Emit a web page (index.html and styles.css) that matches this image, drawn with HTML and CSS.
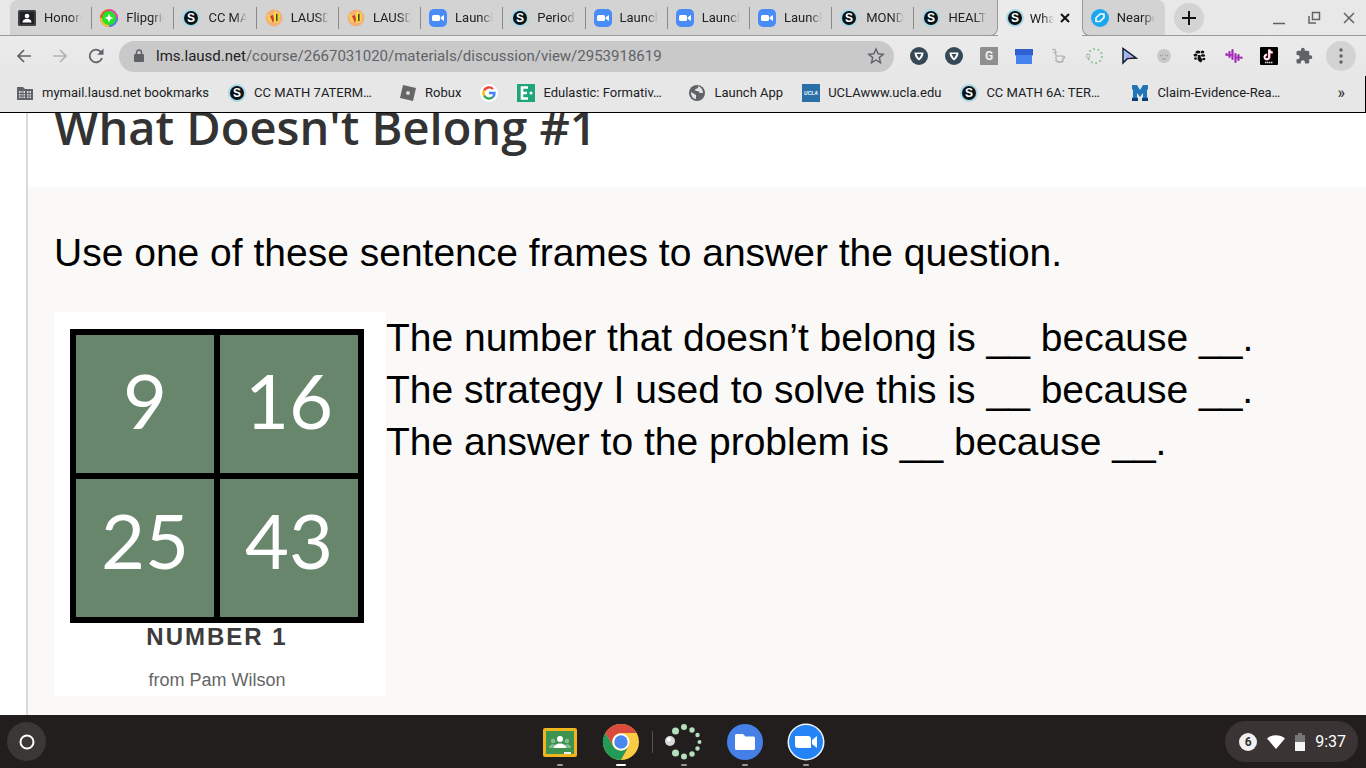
FILE: index.html
```html
<!DOCTYPE html>
<html lang="en">
<head>
    <meta charset="UTF-8">
    <meta name="viewport" content="width=device-width, initial-scale=1.0">
    <title>What Doesn't Belong #1</title>
    <link rel="stylesheet" href="styles.css">
</head>
<body>
    <!-- shared icons -->
    <svg class="defs" aria-hidden="true">
        <symbol id="schoology" viewBox="0 0 18 18">
            <circle cx="9" cy="9" r="9" fill="#a9d9e6"/>
            <circle cx="9" cy="9" r="7" fill="#0b1216"/>
            <text x="9" y="13" text-anchor="middle" font-family="Liberation Sans" font-weight="bold" font-size="12" fill="#fff">S</text>
        </symbol>
        <symbol id="zoom" viewBox="0 0 18 18">
            <rect width="18" height="18" rx="5" fill="#4a8cf7"/>
            <rect x="3" y="6" width="8" height="6" rx="1.5" fill="#fff"/>
            <path d="M11.700 8.200 15 6v6l-3.300-2.200z" fill="#fff"/>
        </symbol>
        <symbol id="lausd" viewBox="0 0 18 18">
            <circle cx="9" cy="9" r="8.500" fill="#f3b07a"/>
            <path d="M1.500 5l6 2 1 7-5-2z" fill="#f6cf55"/>
            <path d="M5 7l3 7 1-3-1-5z" fill="#d8362a"/>
            <path d="M9 3l2-1 1 8-3 5z" fill="#f4e13a"/>
            <path d="M13 3l2 3-1 7-2 1z" fill="#f0d838"/>
            <path d="M11.800 5v7" stroke="#3b4a22" stroke-width="1.500"/>
        </symbol>
        <symbol id="shield" viewBox="0 0 18 18">
            <circle cx="9" cy="9" r="9" fill="#344955"/>
            <path d="M4.500 5.500h9c0 3.500-2 6.500-4.500 8-2.500-1.500-4.500-4.500-4.500-8z" fill="#fff"/>
            <path d="M6.500 7h5L9 11.500z" fill="#344955"/>
        </symbol>
    </svg>

    <div class="tabstrip">
        <nav class="tabs" aria-label="Tabs">
            <a href="#" class="tab">
                <svg class="icon" viewBox="0 0 18 18"><rect y="1" width="18" height="16" rx="1.500" fill="#3c4043"/><rect x="2" y="3" width="14" height="12" fill="#202124"/><circle cx="9" cy="7" r="2.300" fill="#fff"/><path d="M4.500 13.500c0-5 9-5 9 0z" fill="#fff"/></svg>
                <span class="tab-title">Honors</span>
            </a>
            <a href="#" class="tab">
                <svg class="icon" viewBox="0 0 18 18"><circle cx="9" cy="9" r="9" fill="#e8582a"/><path d="M9 0a9 9 0 0 1 9 9h-9z" fill="#e045c0"/><path d="M0 9a9 9 0 0 0 9 9V9z" fill="#f0c52c"/><path d="M9 18a9 9 0 0 0 9-9H9z" fill="#4a82ec"/><circle cx="9" cy="9" r="7" fill="#26e029"/><path d="M9 4.500l1.300 3.200 3.200 1.300-3.200 1.300L9 13.500l-1.300-3.200L4.500 9l3.200-1.300z" fill="#fff"/></svg>
                <span class="tab-title">Flipgrid</span>
            </a>
            <a href="#" class="tab"><svg class="icon"><use href="#schoology"/></svg><span class="tab-title">CC MATH</span></a>
            <a href="#" class="tab"><svg class="icon"><use href="#lausd"/></svg><span class="tab-title">LAUSD</span></a>
            <a href="#" class="tab"><svg class="icon"><use href="#lausd"/></svg><span class="tab-title">LAUSD</span></a>
            <a href="#" class="tab"><svg class="icon"><use href="#zoom"/></svg><span class="tab-title">Launch</span></a>
            <a href="#" class="tab"><svg class="icon"><use href="#schoology"/></svg><span class="tab-title">Period</span></a>
            <a href="#" class="tab"><svg class="icon"><use href="#zoom"/></svg><span class="tab-title">Launch</span></a>
            <a href="#" class="tab"><svg class="icon"><use href="#zoom"/></svg><span class="tab-title">Launch</span></a>
            <a href="#" class="tab"><svg class="icon"><use href="#zoom"/></svg><span class="tab-title">Launch</span></a>
            <a href="#" class="tab"><svg class="icon"><use href="#schoology"/></svg><span class="tab-title">MOND</span></a>
            <a href="#" class="tab before-active"><svg class="icon"><use href="#schoology"/></svg><span class="tab-title">HEALT</span></a>
            <div class="tab active">
                <svg class="icon"><use href="#schoology"/></svg>
                <span class="tab-title">What</span>
                <button class="close" aria-label="Close tab"><svg width="10" height="10" viewBox="0 0 10 10"><path d="M1 1l8 8M9 1l-8 8" stroke="#111" stroke-width="2"/></svg></button>
            </div>
            <a href="#" class="tab last">
                <svg class="icon" viewBox="0 0 18 18"><circle cx="9" cy="9" r="9" fill="#19a7f2"/><path d="M5 12.500V9l4-4h4v3.500l-4 4z" fill="none" stroke="#fff" stroke-width="1.600" stroke-linejoin="round"/></svg>
                <span class="tab-title">Nearpod</span>
            </a>
        </nav>
        <button class="new-tab" aria-label="New tab"><svg width="14" height="14" viewBox="0 0 14 14"><path d="M7 0v14M0 7h14" stroke="#111" stroke-width="2"/></svg></button>
        <div class="window-buttons">
            <button aria-label="Minimize"><svg width="14" height="14" viewBox="0 0 14 14"><path d="M1 12.500h12" stroke="#5f6368" stroke-width="1.500"/></svg></button>
            <button aria-label="Restore"><svg width="14" height="14" viewBox="0 0 14 14"><path d="M5.500 1.500h7v7h-7z" fill="none" stroke="#5f6368" stroke-width="1.500"/><path d="M2 5v7h7" fill="none" stroke="#5f6368" stroke-width="1.500"/></svg></button>
            <button aria-label="Close"><svg width="14" height="14" viewBox="0 0 14 14"><path d="M2 2l10 10M12 2L2 12" stroke="#5f6368" stroke-width="1.500"/></svg></button>
        </div>
    </div>

    <div class="toolbar">
        <div class="nav-buttons">
            <button aria-label="Back"><svg width="18" height="18" viewBox="0 0 18 18"><path d="M16 9H3M9 3L3 9l6 6" fill="none" stroke="#5f6368" stroke-width="1.700"/></svg></button>
            <button aria-label="Forward"><svg width="18" height="18" viewBox="0 0 18 18"><path d="M2 9h13M9 3l6 6-6 6" fill="none" stroke="#b0b2b4" stroke-width="1.700"/></svg></button>
            <button aria-label="Reload"><svg width="18" height="18" viewBox="0 0 18 18"><path d="M15 11A6.300 6.300 0 1 1 13.800 4.900" fill="none" stroke="#5f6368" stroke-width="1.800"/><path d="M16.500 1.500v6.300h-6.300z" fill="#5f6368"/></svg></button>
        </div>
        <div class="omnibox">
            <svg width="12" height="14" viewBox="0 0 12 14"><rect x="1" y="5" width="10" height="8" rx="1" fill="#5f6368"/><path d="M3.500 5V3.500a2.500 2.500 0 0 1 5 0V5" fill="none" stroke="#5f6368" stroke-width="1.400"/></svg>
            <span class="url"><b>lms.lausd.net</b>/course/2667031020/materials/discussion/view/2953918619</span>
            <button aria-label="Bookmark this page"><svg width="18" height="18" viewBox="0 0 18 18"><path d="M9 2l2.100 4.800 5.100.4-3.900 3.400 1.200 5.100L9 13l-4.500 2.700 1.200-5.100L1.800 7.200l5.100-.4z" fill="none" stroke="#5f6368" stroke-width="1.400"/></svg></button>
        </div>
        <div class="extensions">
            <button aria-label="Shield"><svg class="icon"><use href="#shield"/></svg></button>
            <button aria-label="Shield 2"><svg class="icon"><use href="#shield"/></svg></button>
            <button aria-label="G"><svg class="icon" viewBox="0 0 18 18"><path d="M1 0h17v18H0V1z" fill="#8f8f8f"/><text x="9" y="13" text-anchor="middle" font-family="Roboto" font-weight="bold" font-size="12" fill="#eee">G</text></svg></button>
            <button aria-label="Window"><svg class="icon" viewBox="0 0 18 18"><path d="M0 2h18v6l-1 1v8H1V9L0 8z" fill="#4583ee"/><path d="M0 2h18v6H0z" fill="#315fcd"/></svg></button>
            <button aria-label="Cup"><svg class="icon" viewBox="0 0 18 18" fill="none" stroke="#aaa"><path d="M2 3l3-1 1 7M3 6l4-1M6 9h7v3l-2 3H8l-2-3zM13 9l2 1-2 3M5 13c2 3 6 3 9 1"/></svg></button>
            <button aria-label="Dots"><svg class="icon" viewBox="0 0 18 18"><circle cx="10" cy="9" r="7" fill="none" stroke="#94c79b" stroke-width="2" stroke-dasharray="2 2.400"/><circle cx="3" cy="9" r="1.800" fill="#eee" stroke="#888" stroke-width=".6"/></svg></button>
            <button aria-label="Cursor"><svg class="icon" viewBox="0 0 18 18"><path d="M3 1.500v14.500l4.500-4.500 8.500-.5z" fill="#8fc5f0" stroke="#18182c" stroke-width="1.500"/><path d="M6 6v5l6-.7z" fill="#c39ee4"/></svg></button>
            <button aria-label="Face"><svg class="icon" viewBox="0 0 18 18"><circle cx="9" cy="9" r="7" fill="#c8c8c8"/><path d="M5 8l1.500 1L8 8M10 8l1.500 1L13 8M7 12h4" stroke="#999" fill="none"/></svg></button>
            <button aria-label="Paw"><svg class="icon" viewBox="0 0 18 18" fill="#111"><ellipse cx="8" cy="5" rx="2.500" ry="1.500"/><ellipse cx="12.500" cy="5" rx="1.800" ry="1.500"/><ellipse cx="5.500" cy="8" rx="2" ry="1.500"/><ellipse cx="13" cy="8.500" rx="2.200" ry="1.300"/><circle cx="5.500" cy="11.500" r="1.300"/><path d="M8 8h2.500l.5 3 2 1-1 2-1 1.500-2-1-1.500-2z"/><circle cx="14" cy="12" r="1.300"/></svg></button>
            <button aria-label="Sound"><svg class="icon" viewBox="0 0 18 18"><path d="M1.500 7v1M4.500 5v5M7.500 3v9M10.500 7v8M13.500 8v5M16.500 10.500v.5" stroke="#a12bb5" stroke-width="2.200" stroke-linecap="round"/><path d="M2 8h6M10 10.500h6" stroke="#a12bb5" stroke-width="1.500"/></svg></button>
            <button aria-label="TikTok"><svg class="icon" viewBox="0 0 18 18"><rect width="18" height="18" rx="1" fill="#000"/><path d="M9.500 2.500v7.500A2.300 2.300 0 1 1 7.300 7.700M9.500 2.500c.3 2 1.500 3 3.500 3" fill="none" stroke="#e8476a" stroke-width="2.400"/><path d="M9 2.500v7.500A2.300 2.300 0 1 1 6.800 7.700M9 2.500c.3 2 1.500 3 3.500 3" fill="none" stroke="#fff" stroke-width="1.700"/><path d="M5 15.500h8" stroke="#ddd" stroke-width="1.500" stroke-dasharray="1.500 .5"/></svg></button>
            <button aria-label="Extensions"><svg class="icon" viewBox="0 0 24 24"><path d="M20.500 11H19V7a2 2 0 0 0-2-2h-4V3.500a2.500 2.500 0 0 0-5 0V5H4a2 2 0 0 0-2 2v3.800h1.500a2.700 2.700 0 0 1 0 5.400H2V20a2 2 0 0 0 2 2h3.800v-1.500a2.700 2.700 0 0 1 5.400 0V22H17a2 2 0 0 0 2-2v-4h1.500a2.500 2.500 0 0 0 0-5z" fill="#5f6368"/></svg></button>
        </div>
        <button class="menu" aria-label="Menu"><svg width="4" height="16" viewBox="0 0 4 16" fill="#5f6368"><circle cx="2" cy="2" r="1.700"/><circle cx="2" cy="8" r="1.700"/><circle cx="2" cy="14" r="1.700"/></svg></button>
    </div>

    <nav class="bookmarks" aria-label="Bookmarks">
        <a href="#"><svg class="icon" viewBox="0 0 18 18"><path d="M1 3h6l2 2h8v11H1z" fill="#5f6368"/><path d="M3 7h6v7H3zM11 7h4v7h-4z" fill="#ddd"/><path d="M3 9.500h12M3 12h12M5 7v7M7 7v7M13 7v7" stroke="#5f6368"/></svg>mymail.lausd.net bookmarks</a>
        <a href="#" class="long"><svg class="icon"><use href="#schoology"/></svg>CC MATH 7ATERM…</a>
        <a href="#"><svg class="icon" viewBox="0 0 18 18"><path d="M4 1l13 3-3 13L1 14z" fill="#666"/><path d="M7.800 7l3.200.8-.8 3.200-3.200-.8z" fill="#e4e4e4"/></svg>Robux</a>
        <a href="#" aria-label="Google"><svg class="icon" viewBox="0 0 18 18"><circle cx="9" cy="9" r="9" fill="#fff"/><g fill="none" stroke-width="2.400"><path d="M13 5A5.600 5.600 0 0 0 4 6.600" stroke="#ea4335"/><path d="M4 6.600a5.600 5.600 0 0 0 0 4.800" stroke="#fbbc05"/><path d="M4 11.400a5.600 5.600 0 0 0 8.800 1.800" stroke="#34a853"/><path d="M12.800 13.200A5.600 5.600 0 0 0 14.500 9H9" stroke="#4285f4"/></g></svg></a>
        <a href="#" class="long"><svg class="icon" viewBox="0 0 18 18"><rect width="18" height="18" fill="#1fa57b"/><path d="M11 3.500H5v11h6M5 9h5" fill="none" stroke="#fff" stroke-width="2.600"/><circle cx="14" cy="9" r="1.500" fill="#fff"/></svg>Edulastic: Formativ…</a>
        <a href="#"><svg class="icon" viewBox="0 0 18 18"><circle cx="9" cy="9" r="8" fill="#5f6368"/><path d="M10 2c1 2-1 3-3 3 0 2 1 2 3 2l2 2h3c0-3-2-6-5-7zM3 8l5 3v4C5 15 3 12 3 8z" fill="#e4e4e4"/></svg>Launch App</a>
        <a href="#"><svg class="icon" viewBox="0 0 18 18"><rect width="18" height="18" fill="#2a6fa8"/><text x="9" y="11" text-anchor="middle" font-family="Liberation Sans" font-weight="bold" font-style="italic" font-size="5" fill="#fff">UCLA</text></svg>UCLAwww.ucla.edu</a>
        <a href="#" class="long"><svg class="icon"><use href="#schoology"/></svg>CC MATH 6A: TER…</a>
        <a href="#" class="long"><svg class="icon" viewBox="0 0 18 18"><path d="M1 1h5l3 5 3-5h5v4l-1 1v7l1 1v3h-6v-3l1-1V9l-3 4-3-4v4l1 1v3H1v-3l1-1V6L1 5z" fill="#2076b8"/><path d="M1 15.500h6M11 15.500h6" stroke="#0e3e70" stroke-width="3"/></svg>Claim-Evidence-Rea…</a>
        <button class="more" aria-label="More bookmarks">»</button>
    </nav>

    <main class="page">
        <article class="discussion">
            <header class="discussion-header">
                <h1>What Doesn't Belong #1</h1>
            </header>
            <div class="discussion-body">
                <p>Use one of these sentence frames to answer the question.</p>
                <div class="prompt">
                    <figure class="puzzle">
                        <div class="squares">
                            <div>9</div>
                            <div>16</div>
                            <div class="low">25</div>
                            <div class="low">43</div>
                        </div>
                        <figcaption>
                            <strong>NUMBER 1</strong>
                            <span>from Pam Wilson</span>
                        </figcaption>
                    </figure>
                    <div class="frames">
                        <p>The number that doesn’t belong is __ because __.</p>
                        <p>The strategy I used to solve this is __ because __.</p>
                        <p>The answer to the problem is __ because __.</p>
                    </div>
                </div>
            </div>
        </article>
    </main>

    <footer class="shelf">
        <button class="launcher" aria-label="Launcher"><svg width="16" height="16" viewBox="0 0 16 16"><circle cx="8" cy="8" r="6.500" fill="none" stroke="#fff" stroke-width="2"/></svg></button>
        <div class="apps">
            <button class="app" aria-label="Classroom">
                <svg viewBox="0 0 38 38"><rect x="2" y="5" width="34" height="29" rx="2" fill="#f0b51f"/><rect x="5" y="8" width="28" height="23" fill="#3f9350"/><circle cx="12" cy="18" r="2.200" fill="#85bd8e"/><circle cx="26" cy="18" r="2.200" fill="#85bd8e"/><path d="M8 25c0-5 8-5 8 0zM22 25c0-5 8-5 8 0z" fill="#85bd8e"/><circle cx="19" cy="16" r="3" fill="#fff"/><path d="M13 25c0-6 12-6 12 0z" fill="#fff"/><path d="M23 29h7v2h-7z" fill="#eee"/></svg>
            </button>
            <button class="app current" aria-label="Chrome">
                <svg viewBox="0 0 38 38"><circle cx="19" cy="19" r="18" fill="#fbcb43"/><path d="M3.400 10A18 18 0 0 1 34.600 10H19a9 9 0 0 0-8 13z" fill="#d94b3d"/><path d="M3.400 10A18 18 0 0 0 19 37l8-14.500A9 9 0 0 1 11 23z" fill="#229a58"/><circle cx="19" cy="19" r="8.500" fill="#fff"/><circle cx="19" cy="19" r="6.700" fill="#4a87ee"/></svg>
            </button>
            <span class="divider"></span>
            <button class="app" aria-label="Dots">
                <svg viewBox="0 0 38 38" fill="#b3dfbd"><circle cx="5" cy="18" r="5" fill="#d8d8d8"/><circle cx="3.800" cy="16.500" r="2" fill="#fff"/><circle cx="10.500" cy="8" r="3.500"/><circle cx="19" cy="4" r="3"/><circle cx="27" cy="7" r="2.700"/><circle cx="32.500" cy="12" r="2.200"/><circle cx="34.500" cy="19" r="2"/><circle cx="32.500" cy="25.500" r="2.200"/><circle cx="27" cy="31" r="2.700"/><circle cx="19" cy="33.500" r="3"/><circle cx="10.500" cy="30" r="3.500"/></svg>
            </button>
            <button class="app" aria-label="Files">
                <svg viewBox="0 0 38 38"><circle cx="19" cy="19" r="18" fill="#4480e8"/><path d="M9 12.500A1.500 1.500 0 0 1 10.500 11H17l2.500 2.500h8A1.500 1.500 0 0 1 29 15v10.500a1.500 1.500 0 0 1-1.500 1.500h-17A1.500 1.500 0 0 1 9 25.500z" fill="#fff"/></svg>
            </button>
            <button class="app" aria-label="Zoom">
                <svg viewBox="0 0 38 38"><circle cx="19" cy="19" r="18.500" fill="#f2f5fa"/><circle cx="19" cy="19" r="17" fill="#2584f5"/><path d="M8 13h13a3 3 0 0 1 3 3v9H11a3 3 0 0 1-3-3zM25 17l5-4v12l-5-4z" fill="#fff"/></svg>
            </button>
        </div>
        <button class="status">
            <span class="count">6</span>
            <svg width="18" height="14" viewBox="0 0 18 14"><path d="M0 3.500a14 14 0 0 1 18 0L9 14z" fill="#fff"/></svg>
            <svg width="10" height="18" viewBox="0 0 10 18"><path d="M3 0h4v2h3v16H0V2h3z" fill="#777"/><path d="M0 9h10v9H0z" fill="#f5f5f5"/></svg>
            <span>9:37</span>
        </button>
    </footer>
</body>
</html>
```

FILE: styles.css
```css
* {
    box-sizing: border-box;
}
body, html {
    margin: 0;
    padding: 0;
    height: 100%;
}
body {
    display: flex;
    flex-direction: column;
    overflow: hidden;
    font-family: Roboto, sans-serif;
    font-size: 13px;
    color: #202124;
    background-color: #fff;
}
button {
    border: none;
    padding: 0;
    background: none;
    font: inherit;
    color: inherit;
    display: flex;
    align-items: center;
    justify-content: center;
    cursor: pointer;
}
a {
    color: inherit;
    text-decoration: none;
}
p {
    margin: 0;
}
svg {
    display: block;
    flex-shrink: 0;
}
.defs {
    position: absolute;
    width: 0;
    height: 0;
}
.icon {
    width: 18px;
    height: 18px;
}

/* Tabs */
.tabstrip {
    display: flex;
    align-items: center;
    height: 36px;
    flex-shrink: 0;
    padding: 0 10px;
    background-color: #e8e8e8;
    box-shadow: inset 0 -1px #9a9a9a;
}
.tabs {
    display: flex;
    flex: 0 1 1155px;
    height: 36px;
    min-width: 0;
}
.tab {
    display: flex;
    align-items: center;
    gap: 8px;
    flex: 1 1 0;
    min-width: 0;
    padding: 0 10px 0 8px;
    background: linear-gradient(#8a8a8a, #8a8a8a) right center / 1px 22px no-repeat #d3d3d3;
    border-bottom: 1px solid #9a9a9a;
}
.tab:first-child {
    border-top-left-radius: 8px;
}
.tab.before-active {
    background: #d3d3d3;
    border-right: 1px solid #9a9a9a;
    border-bottom-right-radius: 8px;
}
.tab.last {
    background: #d3d3d3;
    border-left: 1px solid #9a9a9a;
    border-bottom-left-radius: 8px;
    border-top-right-radius: 8px;
}
.tab.active {
    gap: 6px;
    padding: 0 12px 0 8px;
    background: #ebebeb;
    border-bottom: none;
    /* covers the strip's bottom line under the neighbours' corners */
    box-shadow: -6px 0 0 -1px #ebebeb, 6px 0 0 -1px #ebebeb;
}
.tab.before-active, .tab.last {
    z-index: 1;
}
.tab-title {
    flex: 1;
    min-width: 0;
    overflow: hidden;
    white-space: nowrap;
    -webkit-mask-image: linear-gradient(to left, transparent, #000 12px);
    mask-image: linear-gradient(to left, transparent, #000 12px);
}
.new-tab {
    width: 30px;
    height: 30px;
    margin-left: 9px;
    border-radius: 50%;
    background-color: #d3d3d3;
}
.window-buttons {
    display: flex;
    gap: 21px;
    margin-left: auto;
}

/* Toolbar */
.toolbar {
    display: flex;
    align-items: center;
    height: 40px;
    flex-shrink: 0;
    padding: 0 10px 0 15px;
    background: linear-gradient(#ebebeb, #e7e7e7);
}
.nav-buttons {
    display: flex;
    gap: 18px;
}
.omnibox {
    display: flex;
    align-items: center;
    flex: 1;
    min-width: 0;
    height: 31px;
    margin: 0 16px 0 14px;
    padding: 0 9px 0 14px;
    border-radius: 16px;
    background-color: #c9c9c9;
}
.url {
    flex: 1;
    min-width: 0;
    margin-left: 11px;
    overflow: hidden;
    white-space: nowrap;
    font-size: 15px;
    color: #5f6368;
}
.url b {
    font-weight: normal;
    color: #202124;
}
.extensions {
    display: flex;
    gap: 17px;
}
.menu {
    width: 30px;
    height: 30px;
    margin-left: 13px;
    border-radius: 50%;
    background-color: #d3d3d3;
}

/* Bookmarks bar */
.bookmarks {
    display: flex;
    align-items: center;
    gap: 19px;
    height: 37px;
    flex-shrink: 0;
    padding: 0 20px 3px 16px;
    background-color: #e7e7e7;
    border-right: 1px solid #000;
    border-bottom: 1px solid #000;
    white-space: nowrap;
}
.bookmarks a {
    display: flex;
    align-items: center;
    gap: 8px;
}
.bookmarks .long {
    min-width: 152px;
}
.more {
    margin-left: auto;
    font-size: 16px;
}

/* Page */
.page {
    flex: 1;
    min-height: 0;
    padding-left: 26px;
    overflow: hidden;
}
.discussion {
    min-height: 100%;
    border-left: 2px solid #dcdad8;
    background-color: #faf9f7;
}
.discussion-header {
    margin-top: -16px; /* scrolled a little under the bookmarks bar */
    padding: 0 26px 30px;
    background-color: #fff;
}
.discussion-header h1 {
    margin: 0;
    font-family: "Open Sans", sans-serif;
    font-size: 47px;
    font-weight: 600;
    line-height: 60px;
    color: #333;
}
.discussion-body {
    padding: 40px 26px;
    font-family: "Liberation Sans", Arial, sans-serif;
    font-size: 39px;
    line-height: 52px;
    color: #000;
}
.prompt {
    display: flex;
    align-items: flex-start;
    margin-top: 33px;
}
.puzzle {
    flex: 0 0 332px;
    margin: 0;
    padding: 17px 22px 6px 16px;
    background-color: #fff;
}
.squares {
    display: grid;
    grid-template-columns: 1fr 1fr;
    gap: 6px;
    padding: 6px;
    background-color: #000;
}
.squares div {
    display: flex;
    align-items: center;
    justify-content: center;
    aspect-ratio: 1;
    padding-bottom: 8px;
    background-color: #68866c;
    color: #fff;
    font-family: Lato, sans-serif;
    font-size: 76px;
    line-height: 92px;
}
.squares .low {
    padding-bottom: 16px;
}
.puzzle figcaption {
    display: flex;
    flex-direction: column;
    align-items: center;
    gap: 19px;
}
.puzzle strong {
    font-size: 24px;
    line-height: 28px;
    letter-spacing: 2px;
    color: #3c3c3c;
}
.puzzle span {
    font-size: 18px;
    line-height: 20px;
    color: #666;
}

/* Shelf */
.shelf {
    display: grid;
    grid-template-columns: 1fr auto 1fr;
    align-items: center;
    height: 53px;
    flex-shrink: 0;
    padding: 0 8px 0 7px;
    background-color: #231e1e;
}
.launcher {
    width: 39px;
    height: 39px;
    border-radius: 50%;
    background-color: #3c3737;
}
.apps {
    display: flex;
    align-items: center;
    gap: 23px;
    height: 53px;
}
.app {
    flex-direction: column;
    gap: 3px;
    height: 53px;
    padding-top: 6px;
}
.app svg {
    width: 38px;
    height: 38px;
}
.app::after {
    content: '';
    width: 6px;
    height: 2px;
    border-radius: 1px;
    background-color: #9a9797;
}
.app.current::after {
    width: 10px;
    background-color: #fff;
}
.divider {
    width: 1px;
    height: 22px;
    margin: 0 -11px;
    background-color: #56504f;
}
.status {
    justify-self: end;
    gap: 10px;
    height: 41px;
    padding: 0 12px 0 14px;
    border-radius: 21px;
    background-color: #3a3434;
    color: #fff;
    font-size: 16px;
}
.count {
    width: 18px;
    border-radius: 50%;
    background-color: #f1f1f1;
    color: #333;
    font-size: 12px;
    font-weight: bold;
    line-height: 18px;
}
```
